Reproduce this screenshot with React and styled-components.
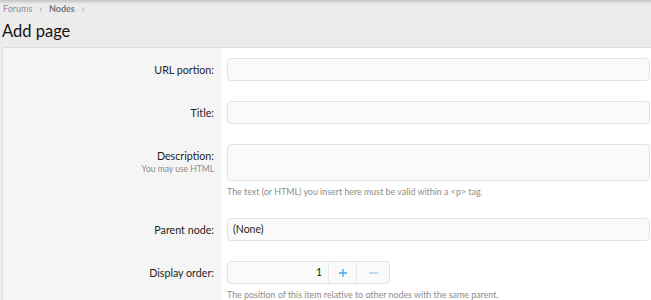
import React from 'react'
import styled, { createGlobalStyle } from 'styled-components'

const GlobalStyle = createGlobalStyle`
  html, body {
    margin: 0;
    padding: 0;
    background: #ececec;
    overflow: hidden;
  }
  body {
    font-family: Lato, "Liberation Sans", sans-serif;
    color: #1e1e1e;
  }
`

const Page = styled.div`
  box-shadow: inset 0 4px 3px -2px rgba(0, 0, 0, 0.18);
  padding-top: 1px;
  height: 300px;
`

const Crumbs = styled.ul`
  display: flex;
  align-items: center;
  gap: 7px;
  list-style: none;
  margin: 0;
  padding: 0 0 0 3px;
  height: 14px;
  font-size: 9px;
  color: #8c8c8c;
  li {
    display: flex;
    align-items: center;
    gap: 7px;
  }
  b {
    font-weight: 700;
    color: #767676;
  }
`

const Title = styled.h1`
  margin: 0;
  padding: 2px 0 0 2px;
  height: 30px;
  line-height: 28px;
  font-size: 16.5px;
  font-weight: 400;
  color: #141414;
`

const Block = styled.div`
  margin-left: 2px;
  margin-right: -20px;
  border: 1px solid #dcdcdc;
  border-radius: 3px 3px 0 0;
  background: #fff;
  display: grid;
  grid-template-columns: 218px 1fr;
`

const Label = styled.div`
  background: #f5f5f5;
  text-align: right;
  padding: 13px 7px 0 0;
  font-size: 10.7px;
  line-height: 17px;
  small {
    display: block;
    font-size: 8.5px;
    line-height: 11px;
    color: #8c8c8c;
  }
`

const Cell = styled.div`
  padding: 10px 20px 10px 6px;
`

const Field = styled.div`
  box-sizing: border-box;
  height: ${p => p.$tall ? '37px' : '23px'};
  border: 1px solid #e3e3e3;
  border-radius: 4px;
  background: #fafafa;
  font-size: 10.5px;
  line-height: 21px;
  padding: 0 5px;
`

const Hint = styled.div`
  margin-top: 4px;
  font-size: 8.9px;
  line-height: 13px;
  color: #8c8c8c;
`

const Spinner = styled.div`
  display: flex;
  width: 163px;
  height: 23px;
  box-sizing: border-box;
  border: 1px solid #e3e3e3;
  border-radius: 4px;
  background: #fafafa;
  font-size: 10.5px;
`

const SpinValue = styled.div`
  flex: 1;
  text-align: right;
  padding-right: 6px;
  line-height: 21px;
`

const SpinButton = styled.div`
  width: ${p => p.$w}px;
  border-left: 1px solid #ebebeb;
  display: flex;
  align-items: center;
  justify-content: center;
  color: ${p => p.$faded ? '#9ccbee' : '#47a3e6'};
`

const Plus = () => (
  <svg width="8" height="8" viewBox="0 0 8 8">
    <path d="M4 0v8M0 4h8" stroke="currentColor" strokeWidth="1.3" />
  </svg>
)

const Minus = () => (
  <svg width="9" height="8" viewBox="0 0 9 8">
    <path d="M0 4h9" stroke="currentColor" strokeWidth="1.3" />
  </svg>
)

const rows = [
  { label: 'URL portion:' },
  { label: 'Title:' },
  { label: 'Description:', sub: 'You may use HTML', tall: true, hint: 'The text (or HTML) you insert here must be valid within a <p> tag.' },
  { label: 'Parent node:', value: '(None)' },
]

export default function App() {
  return (
    <Page>
      <GlobalStyle />
      <Crumbs>
        <li>Forums <span>›</span></li>
        <li><b>Nodes</b> <span>›</span></li>
      </Crumbs>
      <Title>Add page</Title>
      <Block>
        {rows.map(r => (
          <React.Fragment key={r.label}>
            <Label>
              {r.label}
              {r.sub && <small>{r.sub}</small>}
            </Label>
            <Cell>
              <Field $tall={r.tall}>{r.value}</Field>
              {r.hint && <Hint>{r.hint}</Hint>}
            </Cell>
          </React.Fragment>
        ))}
        <Label>Display order:</Label>
        <Cell>
          <Spinner>
            <SpinValue>1</SpinValue>
            <SpinButton $w={27}><Plus /></SpinButton>
            <SpinButton $w={32} $faded><Minus /></SpinButton>
          </Spinner>
          <Hint>The position of this item relative to other nodes with the same parent.</Hint>
        </Cell>
      </Block>
    </Page>
  )
}
